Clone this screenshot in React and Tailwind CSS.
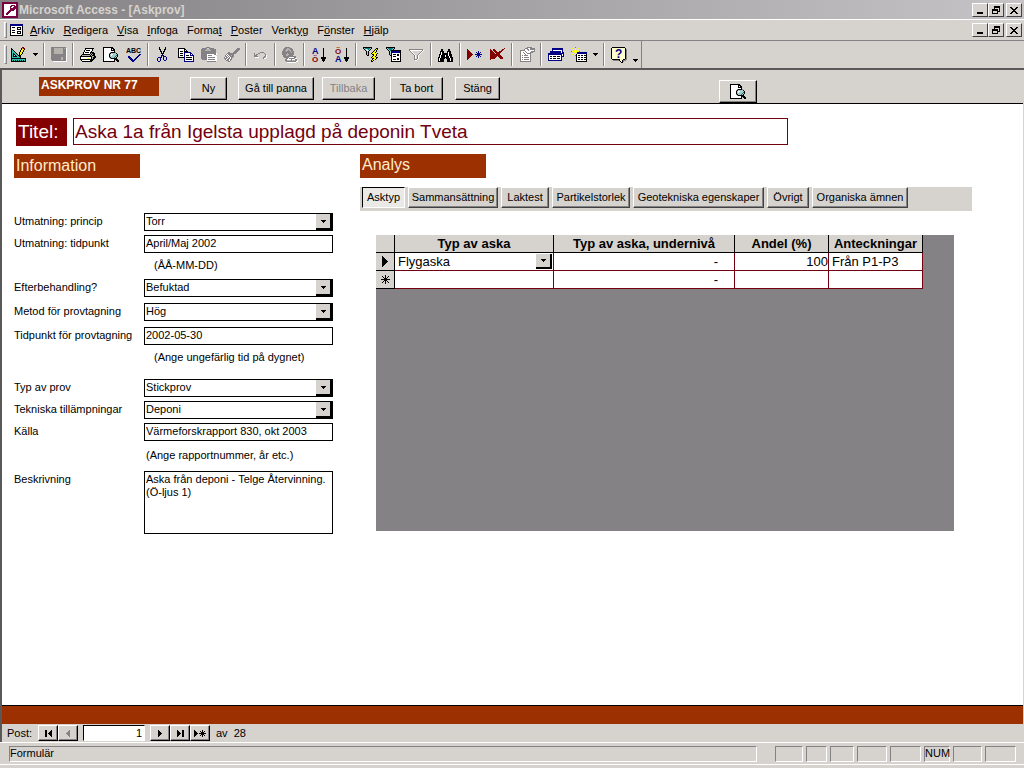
import React, { useState } from 'react';
import clsx from 'clsx';

const COLORS = {
  k: '#000000',
  w: '#ffffff',
  n: '#000084',
  r: '#840000',
  g: '#848284',
  s: '#b5b2ad',
  t: '#008284',
  c: '#a5cbc6',
  a: '#29c3b5',
  y: '#ffff00',
  o: '#848200',
  b: '#d68242',
  p: '#ffffce',
  m: '#7b0041',
};

const ICONS = {
  key: [
    'mmmmmmmmmmmmmmmm',
    'mmmmmmmmmmmmmmmm',
    'mmwwwwwwwwwwwwmm',
    'mmwwwwwwwmmmmwmm',
    'mmwwwwwwmmwwmmmm',
    'mmwwwwwwmwwmmmmm',
    'mmwwwwwwmmmmmmmm',
    'mmwwwwwwmmmmmwmm',
    'mmwwwwwmmmmmwwmm',
    'mmwwwwmmmwwwwwmm',
    'mmwwwmmmwwwwwwmm',
    'mmwwmmmwwwwwwwmm',
    'mmwwmmwwwwwwwwmm',
    'mmwwwwwwwwwwwwmm',
    'mmmmmmmmmmmmmmmm',
    'mmmmmmmmmmmmmmmm',
  ],
  form: [
    'nnnnnnnnnnnnn',
    'nnnnnnnnnnnnn',
    'kwwwwwwwwwwwk',
    'kwkkkwwkkkkwk',
    'kwwwwwwkwwkwk',
    'kwwwwwwkkkkwk',
    'kwkkkwwwwwwwk',
    'kwwwwwwkkkkwk',
    'kwkkkwwkwwkwk',
    'kwwwwwwkkkkwk',
    'kwwwwwwwwwwwk',
    'kkkkkkkkkkkkk',
  ],
  design: [
    '...........rr...',
    'k.........kbrr..',
    'kk........kyyk..',
    'kak......kyyk...',
    'kaak.....kyyk...',
    'kaaak...kyyk....',
    'kakaak..kyyk....',
    'kakkaak.kyk.....',
    'kak.kaakkk......',
    'kakkkkaakk......',
    'kaaaaaaaak......',
    'kkkkkkkkkkkkkkk.',
    'kaaaaaaaaaaaaak.',
    'kakakakakakakak.',
    'kkkkkkkkkkkkkkk.',
  ],
  save: [
    'ggggggggggggggg.',
    'gggsssssssssgsgw',
    'gggsssssssssgggw',
    'gggsssssssssgggw',
    'gggsssssssssgggw',
    'gggsssssssssgggw',
    'gggsssssssssgggw',
    'gggggggggggggggw',
    'gggggggggggggggw',
    'gggggggggggggggw',
    'ggggggggggssgggw',
    'ggggggggggssgggw',
    'ggggggggggssgggw',
    '.ggggggggggggggw',
    '..wwwwwwwwwwwwww',
  ],
  print: [
    '.....kkkkkkkkk..',
    '.....kwwwwwwk...',
    '....kwkkkkwwk...',
    '....kwwwwwwk....',
    '...kwkkkkwkkkk..',
    '...kwwwwwwkskkk.',
    '..kkkkkkkkskskk.',
    '.ksssssssskskkk.',
    'kkkkkkkkkkkksskk',
    'kwwwwwwwwwwkskkk',
    'kwwwwwwyywwkskk.',
    'kkkkkkkkkkkkkk..',
    '.kwwwwwwwwkkk...',
    '..kkkkkkkkkk....',
  ],
  preview: [
    'kkkkkkkkkk......',
    'kwwwwwwwkkk.....',
    'kwwwwwwwkwkk....',
    'kwwwwwwwkkkk....',
    'kwwwwwwwwwwk....',
    'kwwwwwwgkkkkg...',
    'kwwwwwgkccccck..',
    'kwwwwwkcwwcccck.',
    'kwwwwwkcwcccctk.',
    'kwwwwwkccccctck.',
    'kwwwwwgkccctck..',
    'kwwwwwwgkkkkkk..',
    'kwwwwwwwwwwkkkk.',
    'kwwwwwwwwwwk.kkk',
    'kkkkkkkkkkkk..kk',
  ],
  check: [
    '................',
    '................',
    '................',
    '................',
    '................',
    '................',
    '................',
    '.............nn.',
    '............nn..',
    '..nn.......nn...',
    '..nnn.....nn....',
    '...nnn...nn.....',
    '....nnn.nn......',
    '.....nnnn.......',
    '......nn........',
  ],
  cut: [
    '....k.....k.....',
    '....k.....k.....',
    '....kk...kk.....',
    '.....k...k......',
    '.....kk.kk......',
    '......k.k.......',
    '......kkk.......',
    '.......k........',
    '......nnn.......',
    '......n.nnn.....',
    '...nnnn.n..n....',
    '..n..n..n..n....',
    '..n..n..n..n....',
    '..n..n...nn.....',
    '...nn...........',
  ],
  copy: [
    'kkkkkkk.........',
    'kwwwwwkk........',
    'kwwwwwkwk.......',
    'kwkkkwkkkk......',
    'kwwwwwnnnnnnn...',
    'kwkkkwnwwwwwnn..',
    'kwwwwwnwwwwwnwn.',
    'kwkkkwnwkkkwnnnn',
    'kwwwwwnwwwwwwwwn',
    'kkkkkknwkkkkkkwn',
    '......nwwwwwwwwn',
    '......nwkkkkkkwn',
    '......nwwwwwwwwn',
    '......nnnnnnnnnn',
  ],
  paste: [
    '.....gggg.......',
    '.ggggg..ggggg...',
    'gggggssssgggggg.',
    'ggggssssssggggg.',
    'ggggggggggggggg.',
    'ggggggggggggggg.',
    'gggggggggggggggw',
    'ggggggwwwwwwwggw',
    'ggggggwggggwwww.',
    'ggggggwwwwwwwwww',
    'ggggggwgggggggww',
    'ggggggwwwwwwwwww',
    '.gggggwgggggggww',
    '......wwwwwwwwww',
    '......ggggggggg.',
  ],
  brush: [
    '.............ggg',
    '............gggg',
    '...........gggg.',
    '..........gggg..',
    '....gg...gggg...',
    '...ggggggggg....',
    '..gwgggggg......',
    '.gwgwggsgg......',
    '.ggwgwgggg......',
    'gwggwgwgg.......',
    'gggwggwg........',
    '.gwggwgg........',
    '..gggwg.........',
    '....gg..........',
  ],
  undo: [
    '................',
    '................',
    '................',
    '.......gggg.....',
    '.g...gg....g....',
    '.g.gg.......g...',
    '.ggg........gw..',
    '.gggg......ggw..',
    '..wwww....gg.w..',
    '..........gww...',
    '................',
  ],
  globe: [
    '...ggggg........',
    '..gggssggg......',
    '.gggssssggg.....',
    '.ggsssgssgg.....',
    'ggggsgggsggg....',
    'gggggggggsgg....',
    'gggggsgggggg....',
    'ggggsssggggg....',
    '.gggssggggg.....',
    '.ggggggggggggg..',
    '..gggggwwwwwgg..',
    '....ggwggggggww.',
    '...ggwwwwgwwwgg.',
    '...ggssssgsssggw',
    '....ggggggggggww',
    '.....wwwwwwwww..',
  ],
  arrow: [
    '................',
    '............k...',
    '............k...',
    '............k...',
    '............k...',
    '............k...',
    '............k...',
    '............k...',
    '............k...',
    '............k...',
    '..........kkkkk.',
    '..........kkkkk.',
    '...........kkk..',
    '...........kkk..',
    '............k...',
    '................',
  ],
  filterBolt: [
    'kkkkkkkkk.......',
    'kctttttck....kk.',
    '.kcwctck....kyk.',
    '..kcwck....kyk..',
    '...kck....kyyk..',
    '...kck...kyyk...',
    '...kck..kyyyyyk.',
    '...kck...kkyyk..',
    '....kk....kyyk..',
    '.........kyyk...',
    '........kyyyykk.',
    '.........kkyyk..',
    '.........kyyk...',
    '........kyk.....',
    '........kk......',
  ],
  filterForm: [
    'kkkkkkkkk.......',
    'kctttttck.......',
    '.kctttck........',
    '..kctkkkkkkkkkk.',
    '...kcknnnnnnnnk.',
    '...kcknnnnnnnnk.',
    '...kckwwwwwwwwk.',
    '...kckwkkkwkkwk.',
    '....kkwwwwwkkwk.',
    '.....kwkkkwwwwk.',
    '.....kwwwwwwwwk.',
    '.....kwwwwwkkwk.',
    '.....kwkkkwkkwk.',
    '.....kwwwwwwwwk.',
    '.....kkkkkkkkkk.',
  ],
  filter: [
    '................',
    'gggggggggggggg..',
    'gwwwwwwwwwwwwgw.',
    '.gw.........gw..',
    '..gw.......gw...',
    '...gw.....gw....',
    '....gw...gw.....',
    '.....gw.gw......',
    '.....gw.gw......',
    '.....gw.gw......',
    '.....gw.gw......',
    '.....gggw.......',
    '......ww........',
  ],
  find: [
    '................',
    '...kk.....kk....',
    '...kk.....kk....',
    '..kkkk...kkkk...',
    '..kwkk...kwkk...',
    '..kwkkkkkkwkk...',
    '.kkwkkkkkkwkkk..',
    '.kwkkkkwkkwkkk..',
    '.kwkkkkwkkkwkk..',
    'kkwkkkkkkkkwkkk.',
    'kwkkkkk.kkkkwkk.',
    'kwkkkk...kkkwkk.',
    'kwkkkk...kkkwkk.',
    'kkkkkk...kkkkkk.',
  ],
  newRecord: [
    '................',
    'r...............',
    'rr..............',
    'rrr........n....',
    'rrrr.....n.n.n..',
    'rrrrr.....nnn...',
    'rrrrrr..nnnnnnn.',
    'rrrrr.....nnn...',
    'rrrr.....n.n.n..',
    'rrr........n....',
    'rr..............',
    'r...............',
    '................',
    '................',
  ],
  deleteRecord: [
    '..............r.',
    'r..rr.......rr..',
    'rr.rrr.....rr...',
    'rrr.rrr..rrr....',
    'rrrr.rrrrrr.....',
    'rrrrr.rrrr......',
    'rrrrrrrrrr......',
    'rrrrrrrrrrr.....',
    'rrrrrrr.rrrr....',
    'rrrrrr...rrrr...',
    'rrrrr.....rrr...',
    'r..............',
    '................',
    '................',
  ],
  properties: [
    '........ggggg...',
    '......gggwwggggg',
    '.....gwwggwggggg',
    '.gggggwwwgwwwwwg',
    '.gwwwwgwwwwwgggg',
    '.gwwgwwgwwwggg..',
    '.gwwwgwwgggg....',
    '.gwwwwgwwwwg....',
    '.gwgwggggwwg....',
    '.gwwwwwwwwwg....',
    '.gwgwgggggwg....',
    '.gwwwwwwwwwg....',
    '.gwgwgggggwg....',
    '.gwwwwwwwwwg....',
    '.ggggggggggg....',
  ],
  database: [
    '....nnnnnnnnnnn.',
    '....nnnnnnnnnnn.',
    '....nwwwwwwwwwn.',
    '..nnnnnnnnnnnwn.',
    '..nnnnnnnnnnnwnn',
    'nnnnnnnnnnnnnnnn',
    'nnnnnnnnnnnnnnwn',
    'nwwwwwwwwwwwwnwn',
    'nwkkwkkkwkkkwnnn',
    'nwwwwwwwwwwwwn..',
    'nwkkwkkkwkkkwn..',
    'nwwwwwwwwwwwwn..',
    'nnnnnnnnnnnnnn..',
  ],
  newObject: [
    '....o...........',
    '.y..y..y........',
    '..y.y.y.........',
    '...yyy..........',
    'oyyypyyyo.......',
    '...yyynnnnnnnnnn',
    '..y.y.nnnnnnnnnn',
    '.y..ykwwwwwwwwwk',
    '....okwkkwkkwkkk',
    '.....kwwwwwwwwwk',
    '.....kwkkwkkwkkk',
    '.....kwwwwwwwwwk',
    '.....kwkkwkkwkkk',
    '.....kwwwwwwwwwk',
    '.....kkkkkkkkkkk',
  ],
  help: [
    '.kkkkkkkkkkkkk..',
    'kpppppppppppppk.',
    'kpppppppppppppkg',
    'kpppppppppppppkg',
    'kpppppppppppppkg',
    'kpppppppppppppkg',
    'kpppppppppppppkg',
    'kpppppppppppppkg',
    'kpppppppppppppkg',
    'kpppppppppppppkg',
    'kpppppppppppppkg',
    'kpppppppppppppkg',
    '.kkkkkkkkpppkkgg',
    '..ggggggkppkggg.',
    '.........kpkg...',
    '..........kk....',
  ],
  minimize: ['.........', '.........', '.........', '.........', '.........', '.........', '.kkkkkk..', '.kkkkkk..'],
  restore: [
    '..kkkkkk.',
    '..kkkkkk.',
    '..k....k.',
    'kkkkkk.k.',
    'kkkkkk.k.',
    'k....kkk.',
    'k....k...',
    'kkkkkk...',
  ],
  close: ['.........', 'kk....kk.', '.kk..kk..', '..kkkk...', '...kk....', '..kkkk...', '.kk..kk..', 'kk....kk.'],
  down: ['kkkkk', '.kkk.', '..k..'],
  first: ['kk....k', 'kk...kk', 'kk..kkk', 'kk.kkkk', 'kk..kkk', 'kk...kk', 'kk....k'],
  prev: ['...g', '..gg', '.ggg', 'gggg', '.ggg', '..gg', '...g'],
  next: ['k...', 'kk..', 'kkk.', 'kkkk', 'kkk.', 'kk..', 'k...'],
  last: ['k....kk', 'kk...kk', 'kkk..kk', 'kkkk.kk', 'kkk..kk', 'kk...kk', 'k....kk'],
  add: ['k.......k...', 'kk....k.k.k.', 'kkk....kkk..', 'kkkk.kkkkkkk', 'kkk....kkk..', 'kk....k.k.k.', 'k.......k...'],
  current: ['k.....', 'kk....', 'kkk...', 'kkkk..', 'kkkkk.', 'kkkkkk', 'kkkkk.', 'kkkk..', 'kkk...', 'kk....', 'k.....'],
  star: ['....k....', '.k..k..k.', '..k.k.k..', '...kkk...', 'kkkkkkkkk', '...kkk...', '..k.k.k..', '.k..k..k.', '....k....'],
};

// Draws a bitmap as runs of equal pixels
const Icon = ({ name, children }) => {
  const rows = ICONS[name];
  const width = rows[0].length;
  const height = rows.length;
  const runs = [];
  rows.forEach((row, y) => {
    let x = 0;
    while (x < row.length) {
      let end = x + 1;
      while (end < row.length && row[end] === row[x]) end++;
      if (row[x] !== '.') runs.push({ x, y, w: end - x, fill: COLORS[row[x]] });
      x = end;
    }
  });
  return (
    <svg width={width} height={height} viewBox={`0 0 ${width} ${height}`} shapeRendering="crispEdges" className="block shrink-0 overflow-visible" aria-hidden="true">
      {runs.map((r) => (
        <rect key={`${r.x}-${r.y}`} x={r.x} y={r.y} width={r.w} height="1" fill={r.fill} />
      ))}
      {children}
    </svg>
  );
};

const SmallLetter = ({ x, y, fill, size = 9, children }) => (
  <text x={x} y={y} fill={fill} fontSize={size} fontWeight="bold" fontFamily="Liberation Sans, sans-serif">
    {children}
  </text>
);

const MENUS = [
  ['', 'A', 'rkiv'],
  ['', 'R', 'edigera'],
  ['', 'V', 'isa'],
  ['', 'I', 'nfoga'],
  ['Forma', 't', ''],
  ['', 'P', 'oster'],
  ['Verkt', 'y', 'g'],
  ['F', 'ö', 'nster'],
  ['', 'H', 'jälp'],
];

const TOOL_GROUPS = [
  [{ icon: 'design', label: 'Vy', menu: true }],
  [{ icon: 'save', label: 'Spara', disabled: true }],
  [{ icon: 'print', label: 'Skriv ut' }, { icon: 'preview', label: 'Förhandsgranska' }, { icon: 'check', label: 'Stavning' }],
  [
    { icon: 'cut', label: 'Klipp ut' },
    { icon: 'copy', label: 'Kopiera' },
    { icon: 'paste', label: 'Klistra in', disabled: true },
    { icon: 'brush', label: 'Hämta format', disabled: true },
  ],
  [{ icon: 'undo', label: 'Ångra', disabled: true }],
  [{ icon: 'globe', label: 'Infoga hyperlänk', disabled: true }],
  [{ icon: 'sortAsc', label: 'Sortera stigande' }, { icon: 'sortDesc', label: 'Sortera fallande' }],
  [
    { icon: 'filterBolt', label: 'Filtrera efter markering' },
    { icon: 'filterForm', label: 'Filtrera efter formulär' },
    { icon: 'filter', label: 'Använd filter', disabled: true },
  ],
  [{ icon: 'find', label: 'Sök' }],
  [{ icon: 'newRecord', label: 'Ny post' }, { icon: 'deleteRecord', label: 'Ta bort post' }],
  [{ icon: 'properties', label: 'Egenskaper', disabled: true }],
  [{ icon: 'database', label: 'Databasfönster' }, { icon: 'newObject', label: 'Nytt objekt', menu: true }],
];

const ToolIcon = ({ name }) => {
  if (name === 'sortAsc') {
    return (
      <Icon name="arrow">
        <SmallLetter x="1" y="7" fill="#000084">A</SmallLetter>
        <SmallLetter x="1" y="15" size={8} fill="#840000">Ö</SmallLetter>
      </Icon>
    );
  }
  if (name === 'sortDesc') {
    return (
      <Icon name="arrow">
        <SmallLetter x="1" y="7" size={8} fill="#840000">Ö</SmallLetter>
        <SmallLetter x="1" y="15" fill="#000084">A</SmallLetter>
      </Icon>
    );
  }
  if (name === 'check') {
    return (
      <Icon name="check">
        <SmallLetter x="0" y="6" size={7} fill="#000000">ABC</SmallLetter>
      </Icon>
    );
  }
  return <Icon name={name} />;
};

const Separator = () => (
  <div className="flex w-1.5 justify-center">
    <div className="h-[23px] w-0.5 border-l border-r border-l-[#848284] border-r-white"></div>
  </div>
);

const WindowButtons = () => (
  <div className="flex pr-0.5">
    {['minimize', 'restore', 'close'].map((name) => (
      <button
        key={name}
        aria-label={name}
        className={clsx(
          'flex h-3.5 w-4 items-center justify-center border border-t-white border-l-white border-r-[#424142] border-b-[#424142] bg-[#d6d3ce]',
          name === 'close' && 'ml-0.5'
        )}
      >
        <Icon name={name} />
      </button>
    ))}
  </div>
);

const FormButton = ({ className, disabled, children, label }) => (
  <button
    disabled={disabled}
    aria-label={label}
    className={clsx(
      'flex h-[23px] items-center justify-center border border-t-white border-l-white border-r-black border-b-black bg-[#d6d3ce] shadow-[inset_-1px_-1px_0_#848284] disabled:text-[#848284]',
      className
    )}
  >
    {children}
  </button>
);

const FIELDS = [
  { id: 'princip', label: 'Utmatning: princip', type: 'select', value: 'Torr' },
  { id: 'tidpunkt', label: 'Utmatning: tidpunkt', type: 'text', value: 'April/Maj 2002', space: 'mt-1' },
  { id: 'n1', type: 'note', value: '(ÅÅ-MM-DD)', space: 'mt-1', indent: 'pl-2.5' },
  { id: 'efter', label: 'Efterbehandling?', type: 'select', value: 'Befuktad', space: 'mt-1' },
  { id: 'metod', label: 'Metod för provtagning', type: 'select', value: 'Hög', space: 'mt-1.5' },
  { id: 'provtid', label: 'Tidpunkt för provtagning', type: 'text', value: '2002-05-30', space: 'mt-1.5' },
  { id: 'n2', type: 'note', value: '(Ange ungefärlig tid på dygnet)', space: 'mt-1', indent: 'pl-2.5' },
  { id: 'typ', label: 'Typ av prov', type: 'select', value: 'Stickprov', space: 'mt-3' },
  { id: 'teknisk', label: 'Tekniska tillämpningar', type: 'select', value: 'Deponi', space: 'mt-1' },
  { id: 'kalla', label: 'Källa', type: 'text', value: 'Värmeforskrapport 830, okt 2003', space: 'mt-1' },
  { id: 'n3', type: 'note', value: '(Ange rapportnummer, år etc.)', space: 'mt-1.5', indent: 'pl-0.5' },
  { id: 'beskrivning', label: 'Beskrivning', type: 'area', value: 'Aska från deponi - Telge Återvinning.\n(Ö-ljus 1)', space: 'mt-1.5' },
];

const DropButton = () => (
  <span className="pointer-events-none absolute inset-y-px right-px flex w-4 items-center justify-center border-r-2 border-b-2 border-black bg-[#d6d3ce]">
    <Icon name="down" />
  </span>
);

const Field = ({ field }) => {
  const { id, label, type, value, space, indent } = field;
  if (type === 'note') {
    return <p className={clsx('ml-[130px] h-[18px] leading-4', space, indent)}>{value}</p>;
  }
  return (
    <div className={clsx('flex', space)}>
      <label htmlFor={id} className="w-[130px] shrink-0 leading-4">{label}</label>
      {type === 'select' && (
        <div className="relative flex-1">
          <select id={id} defaultValue={value} className="block h-[18px] w-full appearance-none border border-black bg-white pb-0.5 pl-px leading-[14px]">
            <option>{value}</option>
          </select>
          <DropButton />
        </div>
      )}
      {type === 'text' && (
        <input id={id} type="text" defaultValue={value} className="h-[18px] min-w-0 flex-1 border border-black bg-white pb-0.5 pl-px" />
      )}
      {type === 'area' && (
        <textarea id={id} defaultValue={value} className="h-[63px] min-w-0 flex-1 resize-none overflow-hidden border border-black bg-white pt-px pl-px leading-[13px]" />
      )}
    </div>
  );
};

const TABS = [
  { name: 'Asktyp', width: 'w-[43px]' },
  { name: 'Sammansättning', width: 'w-[90px]' },
  { name: 'Laktest', width: 'w-12' },
  { name: 'Partikelstorlek', width: 'w-[78px]' },
  { name: 'Geotekniska egenskaper', width: 'w-[131px]' },
  { name: 'Övrigt', width: 'w-[42px]' },
  { name: 'Organiska ämnen', width: 'w-[96px]' },
];

const Tabs = () => {
  const [active, setActive] = useState('Asktyp');
  return (
    <div role="tablist" className="flex h-6 gap-[3px] bg-[#d6d3ce] pl-0.5">
      {TABS.map(({ name, width }) => (
        <button
          key={name}
          role="tab"
          aria-selected={active === name}
          onClick={() => setActive(name)}
          className={clsx(
            'h-[21px] whitespace-nowrap border',
            width,
            active === name
              ? 'border-t-black border-l-black border-r-white border-b-white bg-[#ebe9e6]'
              : 'border-t-white border-l-white border-r-[#424142] border-b-[#424142] bg-[#d6d3ce] shadow-[inset_-1px_-1px_0_#848284]'
          )}
        >
          {name}
        </button>
      ))}
    </div>
  );
};

const AshTable = () => (
  <table className="w-[547px] table-fixed border-separate border-spacing-0 bg-white text-[13px] leading-4">
    <colgroup>
      <col className="w-[19px]" />
      <col className="w-[159px]" />
      <col className="w-[181px]" />
      <col className="w-[94px]" />
      <col className="w-[94px]" />
    </colgroup>
    <thead>
      <tr className="h-[18px] bg-[#d6d3ce]">
        <th className="border-r border-b border-black p-0"></th>
        <th className="border-r border-b border-black p-0">Typ av aska</th>
        <th className="border-r border-b border-black p-0">Typ av aska, undernivå</th>
        <th className="border-r border-b border-black p-0">Andel (%)</th>
        <th className="border-r border-b border-black p-0">Anteckningar</th>
      </tr>
    </thead>
    <tbody>
      <tr className="h-[18px]">
        <td className="border-r border-b border-black bg-[#d6d3ce] p-0"><div className="flex justify-center"><Icon name="current" /></div></td>
        <td className="border-r border-b border-[#730010] p-0">
          <div className="relative">
            <select aria-label="Typ av aska" defaultValue="Flygaska" className="block h-[17px] w-full appearance-none bg-white pl-[3px] leading-4">
              <option>Flygaska</option>
            </select>
            <DropButton />
          </div>
        </td>
        <td className="border-r border-b border-[#730010] p-0 pr-4 text-right">-</td>
        <td className="border-r border-b border-[#730010] p-0 text-right">100</td>
        <td className="border-r border-b border-[#730010] p-0 pl-[3px]">Från P1-P3</td>
      </tr>
      <tr className="h-[18px]">
        <td className="border-r border-b border-black bg-[#d6d3ce] p-0"><div className="flex justify-center"><Icon name="star" /></div></td>
        <td className="border-r border-b border-[#730010] p-0"></td>
        <td className="border-r border-b border-[#730010] p-0 pr-4 text-right">-</td>
        <td className="border-r border-b border-[#730010] p-0"></td>
        <td className="border-r border-b border-[#730010] p-0"></td>
      </tr>
    </tbody>
  </table>
);

const NavButton = ({ icon, label, disabled }) => (
  <button
    aria-label={label}
    disabled={disabled}
    className="flex h-4 w-5 items-center justify-center border border-t-white border-l-white border-r-black border-b-black bg-[#d6d3ce] shadow-[inset_-1px_-1px_0_#848284]"
  >
    <Icon name={icon} />
  </button>
);

const STATUS_CELLS = [
  { width: 'w-7' },
  { width: 'w-[21px]' },
  { width: 'w-6' },
  { width: 'w-[30px]' },
  { width: 'w-[31px]' },
  { width: 'w-[26px]', text: 'NUM' },
  { width: 'w-[29px]' },
  { width: 'w-[31px]' },
];

export default function App() {
  return (
    <div className="flex min-h-screen flex-col bg-[#d6d3ce] font-['Liberation_Sans',Arial,sans-serif] text-[11px] leading-[13px] text-black">
      {/* Title bar */}
      <header className="flex h-[19px] items-center bg-linear-to-r from-[#848284] to-[#c6c3c6] pl-0.5">
        <Icon name="key" />
        <h1 className="ml-px flex-1 text-xs leading-4 font-bold text-[#d6d3ce]">Microsoft Access - [Askprov]</h1>
        <WindowButtons />
      </header>

      {/* Menu bar */}
      <nav className="flex h-[22px] items-center border-t border-b border-t-white border-b-[#848284] pl-1">
        <div className="h-4 w-[3px] border border-t-white border-l-white border-r-[#848284] border-b-[#848284]"></div>
        <div className="ml-[3px]"><Icon name="form" /></div>
        <div className="ml-[7px] flex flex-1 gap-[9px]">
          {MENUS.map(([before, key, after]) => (
            <button key={before + key + after}>{before}<u>{key}</u>{after}</button>
          ))}
        </div>
        <WindowButtons />
      </nav>

      {/* Toolbar */}
      <div className="flex h-[29px] border-b-2 border-[#5a595a]">
        <div className="flex items-center border-r border-[#848284] pl-1">
          <div className="h-[19px] w-[3px] border border-t-white border-l-white border-r-[#848284] border-b-[#848284]"></div>
          {TOOL_GROUPS.map((group) => (
            <React.Fragment key={group[0].icon}>
              {group.map((tool) => (
                <React.Fragment key={tool.icon}>
                  <button aria-label={tool.label} disabled={tool.disabled} className="flex h-[22px] w-[23px] items-center justify-center">
                    <ToolIcon name={tool.icon} />
                  </button>
                  {tool.menu && (
                    <button aria-label={`${tool.label} meny`} className="flex h-[22px] w-[11px] items-center justify-center">
                      <Icon name="down" />
                    </button>
                  )}
                </React.Fragment>
              ))}
              <Separator />
            </React.Fragment>
          ))}
          <button aria-label="Hjälp" className="flex h-[22px] w-[23px] items-center justify-center">
            <Icon name="help">
              <SmallLetter x="4" y="11" size={12} fill="#000084">?</SmallLetter>
            </Icon>
          </button>
          <button aria-label="Fler knappar" className="flex h-[22px] w-[11px] items-end justify-center pb-1">
            <Icon name="down" />
          </button>
        </div>
      </div>

      <main className="flex flex-1 flex-col border-r border-l-2 border-l-[#5a595a] border-r-[#d6d3ce]">
        {/* Form header */}
        <div className="flex h-[34px] items-start border-b border-black pt-[7px] pl-[37px]">
          <h2 className="h-[19px] w-[120px] bg-[#9c3000] pl-0.5 text-xs leading-4 font-bold text-white">ASKPROV NR 77</h2>
          <FormButton className="ml-[31px] w-[37px]">Ny</FormButton>
          <FormButton className="ml-[11px] w-[76px]">Gå till panna</FormButton>
          <FormButton className="ml-2 w-[53px]" disabled>Tillbaka</FormButton>
          <FormButton className="ml-[15px] w-[53px]">Ta bort</FormButton>
          <FormButton className="ml-3 w-[45px]">Stäng</FormButton>
          <FormButton className="mt-[3px] ml-[219px] w-[38px]" label="Förhandsgranska">
            <Icon name="preview" />
          </FormButton>
        </div>

        {/* Form detail */}
        <div className="flex-1 bg-white pt-3.5 pl-3">
          <div className="flex pl-0.5">
            <label htmlFor="titel" className="h-7 w-[51px] bg-[#840000] pl-0.5 text-[19px] leading-7 text-white">Titel:</label>
            <input
              id="titel"
              type="text"
              defaultValue="Aska 1a från Igelsta upplagd på deponin Tveta"
              className="ml-1.5 h-[27px] w-[71%] border border-[#730010] pl-px text-[19px] text-[#730010]"
            />
          </div>

          <div className="mt-2 flex gap-[27px]">
            <section className="w-[319px] shrink-0">
              <h3 className="h-6 w-[126px] bg-[#9c3000] pl-0.5 text-base leading-6 text-[#ffebce]">Information</h3>
              <form className="mt-[35px]">
                {FIELDS.map((field) => (
                  <Field key={field.id} field={field} />
                ))}
              </form>
            </section>

            <section className="mr-[51px] min-w-0 flex-1">
              <h3 className="h-6 w-[126px] bg-[#9c3000] pl-0.5 text-base leading-[22px] text-[#ffebce]">Analys</h3>
              <div className="mt-[9px]"><Tabs /></div>
              <div className="mt-6 mr-[18px] ml-4 h-[296px] bg-[#848284]">
                <AshTable />
              </div>
            </section>
          </div>
        </div>

        {/* Form footer */}
        <div className="h-[19px] border-t border-black bg-[#9c3000]"></div>

        <div className="flex h-[18px] items-center pl-[5px]">
          <label htmlFor="post" className="w-[31px]">Post:</label>
          <NavButton icon="first" label="Första posten" />
          <NavButton icon="prev" label="Föregående post" disabled />
          <input id="post" type="text" defaultValue="1" className="mx-[5px] h-4 w-[62px] border border-t-black border-l-black border-r-white border-b-white bg-white pr-0.5 text-right" />
          <NavButton icon="next" label="Nästa post" />
          <NavButton icon="last" label="Sista posten" />
          <NavButton icon="add" label="Ny post" />
          <span className="ml-1.5 flex gap-1.5"><span>av</span><span>28</span></span>
        </div>
      </main>

      {/* Status bar */}
      <footer className="border-t border-white pb-[3px]">
        <div className="flex h-[22px] items-center gap-[3px] border-b border-white pr-2 pl-[9px]">
          <div className="mr-[15px] h-4 flex-1 border border-t-[#848284] border-l-[#848284] border-r-white border-b-white">Formulär</div>
          {STATUS_CELLS.map(({ width, text }, i) => (
            <div key={i} className={clsx('h-4 border border-t-[#848284] border-l-[#848284] border-r-white border-b-white text-center', width)}>
              {text}
            </div>
          ))}
        </div>
      </footer>
    </div>
  );
}
